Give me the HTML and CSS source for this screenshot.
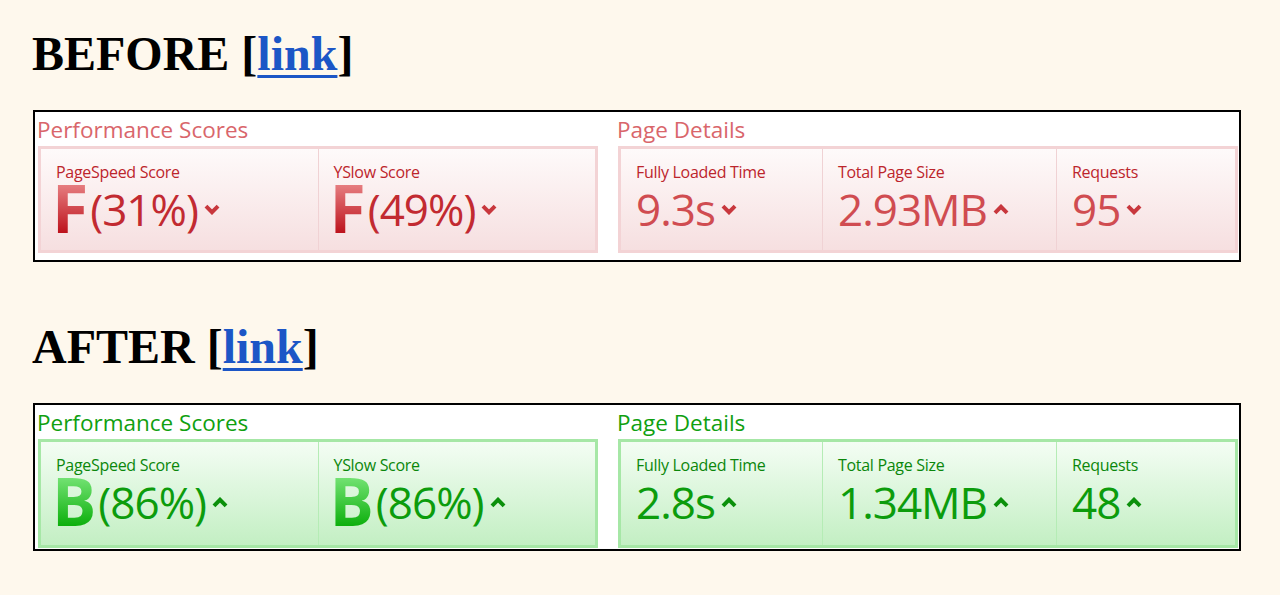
FILE: index.html
```html
<!DOCTYPE html>
<html lang="en">
<head>
  <meta charset="UTF-8">
  <title>Before / After</title>
  <link rel="stylesheet" href="styles.css">
</head>
<body>

  <div class="post">
    <h2>BEFORE [<a href="#">link</a>]</h2>

    <div class="report bad">
      <div class="group scores">
        <div class="group-title">Performance Scores</div>
        <div class="panel">
          <div class="cell">
            <div class="label">PageSpeed Score</div>
            <div class="value"><span class="grade">F</span>(31%)<svg class="arrow" viewBox="0 0 14 10"><polyline points="1.5,2 7,7.5 12.5,2"/></svg></div>
          </div>
          <div class="cell">
            <div class="label">YSlow Score</div>
            <div class="value"><span class="grade">F</span>(49%)<svg class="arrow" viewBox="0 0 14 10"><polyline points="1.5,2 7,7.5 12.5,2"/></svg></div>
          </div>
        </div>
      </div>
      <div class="group details">
        <div class="group-title">Page Details</div>
        <div class="panel">
          <div class="cell c1">
            <div class="label">Fully Loaded Time</div>
            <div class="value">9.3s<svg class="arrow" viewBox="0 0 14 10"><polyline points="1.5,2 7,7.5 12.5,2"/></svg></div>
          </div>
          <div class="cell c2">
            <div class="label">Total Page Size</div>
            <div class="value">2.93MB<svg class="arrow" viewBox="0 0 14 10"><polyline points="1.5,8 7,2.5 12.5,8"/></svg></div>
          </div>
          <div class="cell c3">
            <div class="label">Requests</div>
            <div class="value">95<svg class="arrow" viewBox="0 0 14 10"><polyline points="1.5,2 7,7.5 12.5,2"/></svg></div>
          </div>
        </div>
      </div>
    </div>

    <h2>AFTER [<a href="#">link</a>]</h2>

    <div class="report good">
      <div class="group scores">
        <div class="group-title">Performance Scores</div>
        <div class="panel">
          <div class="cell">
            <div class="label">PageSpeed Score</div>
            <div class="value"><span class="grade">B</span>(86%)<svg class="arrow" viewBox="0 0 14 10"><polyline points="1.5,8 7,2.5 12.5,8"/></svg></div>
          </div>
          <div class="cell">
            <div class="label">YSlow Score</div>
            <div class="value"><span class="grade">B</span>(86%)<svg class="arrow" viewBox="0 0 14 10"><polyline points="1.5,8 7,2.5 12.5,8"/></svg></div>
          </div>
        </div>
      </div>
      <div class="group details">
        <div class="group-title">Page Details</div>
        <div class="panel">
          <div class="cell c1">
            <div class="label">Fully Loaded Time</div>
            <div class="value">2.8s<svg class="arrow" viewBox="0 0 14 10"><polyline points="1.5,8 7,2.5 12.5,8"/></svg></div>
          </div>
          <div class="cell c2">
            <div class="label">Total Page Size</div>
            <div class="value">1.34MB<svg class="arrow" viewBox="0 0 14 10"><polyline points="1.5,8 7,2.5 12.5,8"/></svg></div>
          </div>
          <div class="cell c3">
            <div class="label">Requests</div>
            <div class="value">48<svg class="arrow" viewBox="0 0 14 10"><polyline points="1.5,8 7,2.5 12.5,8"/></svg></div>
          </div>
        </div>
      </div>
    </div>
  </div>

</body>
</html>
```

FILE: styles.css
```css
body {
  margin: 0;
  background-color: #fef8ed;
  font-family: "Liberation Serif", serif;
}

.post {
  padding: 26px 0 0 32px;
  width: 1209px;
}

h2 {
  font-size: 48px;
  font-weight: bold;
  line-height: 56px;
  margin: 0 0 28px;
  color: #000;
}

h2 a {
  color: #1c56c6;
  text-decoration-thickness: 3px;
  text-underline-offset: 5px;
}

/* caixa do relatorio */
.report {
  display: flex;
  gap: 20px;
  border: 2px solid #000;
  background-color: #fff;
  padding: 4px 1px 7px 3px;
  margin: 0 0 57px 1px;
  font-family: "Open Sans", sans-serif;
}

.report.good { padding-bottom: 1px; }

.scores { width: 560px; }
.details { width: 620px; }

.group-title {
  font-size: 22.5px;
  line-height: 28px;
  margin: 0 0 2px -1px;
}

.panel {
  display: flex;
  height: 101px;
  border: 3px solid;
}

.good .panel { height: 103px; }

.cell {
  flex: 1;
  box-sizing: border-box;
  padding: 13px 0 0 15px;
  border-right: 1px solid;
}

.cell:last-child { border-right: none; }

.details .c1 { flex: 0 0 202px; }
.details .c2 { flex: 0 0 234px; }
.details .c3 { flex: 1; }

.label {
  font-size: 16px;
  line-height: 20px;
  letter-spacing: -0.3px;
}

.value {
  display: flex;
  align-items: center;
  font-size: 44px;
  line-height: 56px;
  letter-spacing: -1px;
  margin-top: -1px;
}

.grade {
  font-size: 66px;
  font-weight: bold;
  letter-spacing: 0;
  line-height: 56px;
  margin: -4px 2px 0 -4px;
  -webkit-background-clip: text;
  background-clip: text;
  color: transparent;
}

.arrow {
  width: 16px;
  height: 11px;
  margin-left: 6px;
  fill: none;
  stroke-width: 3.6;
}

/* vermelho */
.bad .group-title { color: #d9666b; }
.bad .panel {
  border-color: #f3d3d5;
  background: linear-gradient(#fefafa, #f6dfe0);
}
.bad .cell { border-color: #f0d2d4; }
.bad .label { color: #bc252c; }
.bad .scores .value { color: #c22a31; }
.bad .details .value { color: #d04c51; }
.bad .arrow { stroke: #c8373d; }
.bad .grade { background-image: linear-gradient(#eb8a8c, #bb0e18); }

/* verde */
.good .group-title { color: #10a010; }
.good .panel {
  border-color: #a6e7a6;
  background: linear-gradient(#f4fdf4, #c3efc3);
}
.good .cell { border-color: #b5ecb5; }
.good .label { color: #0b870b; }
.good .value { color: #0c9c0c; }
.good .arrow { stroke: #0b900b; }
.good .grade { background-image: linear-gradient(#7fe87f, #08ad08); }
```
